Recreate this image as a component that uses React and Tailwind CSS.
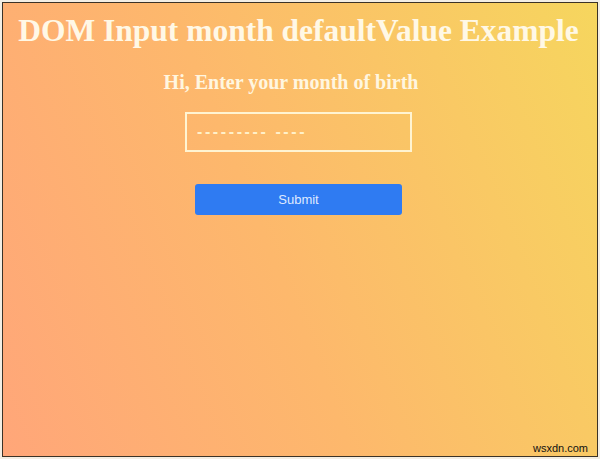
import React from "react";

export default function App() {
  return (
    <div className="w-[600px] h-[459px] bg-[#f3eee4] p-[2px]">
      <div className="relative h-full w-full border border-[#3b3226] bg-[linear-gradient(68deg,#ffa679_0%,#fdb86c_45%,#f6d65e_100%)] flex flex-col items-center pr-[3px]">
        <h1 className="mt-[10px] text-[31.5px] leading-[36px] font-bold text-[#fff8e6] font-['Liberation_Serif',serif] whitespace-nowrap">
          DOM Input month defaultValue Example
        </h1>
        <h3 className="mt-[21px] mr-[15px] text-[20px] leading-[24px] font-bold text-[#fff6e0] font-['Liberation_Serif',serif] whitespace-nowrap">
          Hi, Enter your month of birth
        </h3>
        <div className="mt-[18px] w-[227px] h-[40px] border-2 border-[#fff4d2] flex items-center pl-[10px]">
          <span className="font-['Liberation_Sans',Arial,sans-serif] text-[16px] font-bold tracking-[2.6px] text-[#fff0c8] whitespace-pre leading-none">
            {"--------- ----"}
          </span>
        </div>
        <button className="mt-[32px] w-[207px] h-[31px] rounded-[3px] bg-[#2f7bf2] text-[#dfeaff] text-[13px] font-['Liberation_Sans',Arial,sans-serif] flex items-center justify-center">
          Submit
        </button>
        <span className="absolute right-[9px] bottom-[2px] text-[11px] leading-none text-[#111] font-['Liberation_Sans',Arial,sans-serif]">
          wsxdn.com
        </span>
      </div>
    </div>
  );
}
